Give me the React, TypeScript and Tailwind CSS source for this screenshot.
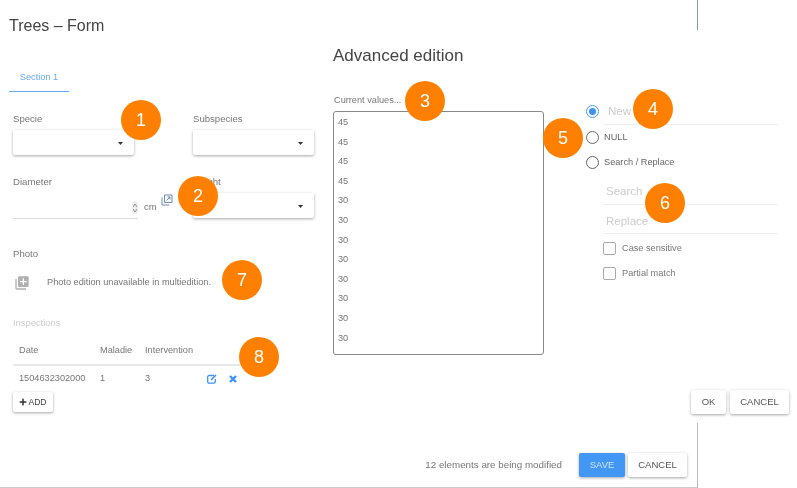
import React from "react";
import { MdLibraryAdd } from "react-icons/md";
import { FaPlus } from "react-icons/fa";

const Caret = () => (
  <svg width="5" height="3" viewBox="0 0 5 3" className="absolute right-[11px] top-[12px]">
    <path d="M0 0h5L2.5 3z" fill="#333" />
  </svg>
);

const Select = () => (
  <div className="relative w-[121px] h-[25px] bg-white rounded-[2px] shadow-[0_1px_3px_rgba(0,0,0,0.35)]">
    <Caret />
  </div>
);

const Btn = ({ children, className = "" }: { children: React.ReactNode; className?: string }) => (
  <div className={"h-[24px] flex items-center justify-center bg-white rounded-[2px] text-[9.5px] text-[#555] shadow-[0_1px_3px_rgba(0,0,0,0.35)] " + className}>
    {children}
  </div>
);

const Badge = ({ n, className }: { n: number; className: string }) => (
  <div className={"absolute w-[40px] h-[40px] rounded-full bg-[#ff8000] text-white text-[18px] font-medium flex items-center justify-center " + className}>
    {n}
  </div>
);

const Radio = ({ on = false }: { on?: boolean }) => (
  <div className={"w-[13px] h-[13px] rounded-full border-[1.5px] flex items-center justify-center shrink-0 " + (on ? "border-[#4a9bf5]" : "border-[#666]")}>
    {on && <div className="w-[7px] h-[7px] rounded-full bg-[#3f93f3]" />}
  </div>
);

const Check = ({ label }: { label: string }) => (
  <div className="flex items-center h-[25px] gap-[6px] text-[9.2px] text-[#777]">
    <div className="w-[13px] h-[13px] rounded-[2px] border border-[#aaa]" />
    {label}
  </div>
);

const values = [45, 45, 45, 45, 30, 30, 30, 30, 30, 30, 30, 30];

export default function App() {
  return (
    <div className="relative w-[797px] h-[488px] overflow-hidden bg-white text-[#666] font-['Liberation_Sans',Arial,sans-serif] blur-[0.35px]">
      <div className="flex h-[453px]">
        {/* Form */}
        <div className="w-[333px] shrink-0 pl-[13px]">
          <h1 className="-ml-[4px] mt-[16px] h-[20px] text-[16px] leading-[20px] text-[#444] font-normal">Trees – Form</h1>
          <div className="-ml-[4px] mt-[20px] w-[60px] h-[36px] pt-[15px] border-b border-[#64a9f5] text-center text-[9.2px] leading-[12px] text-[#64a9f5]">
            Section 1
          </div>
          <div className="mt-[21px] grid grid-cols-[121px_121px] gap-x-[59px]">
            <div>
              <div className="text-[9.6px] leading-[12px] text-[#777] mb-[5px]">Specie</div>
              <Select />
            </div>
            <div>
              <div className="text-[9.6px] leading-[12px] text-[#777] mb-[5px]">Subspecies</div>
              <Select />
            </div>
          </div>
          <div className="mt-[21px] grid grid-cols-[121px_121px] gap-x-[59px]">
            <div className="relative">
              <div className="text-[9.6px] leading-[12px] text-[#777]">Diameter</div>
              <div className="mt-[17px] w-[125px] h-[14px] border-b border-[#ddd]" />
              <div className="absolute left-[119px] top-[25px] w-[6px] h-[13px] rounded-[3px] bg-[#eee] flex flex-col items-center justify-center gap-[2px]">
                <svg width="4" height="3" viewBox="0 0 4 3"><path d="M0 3l2-3 2 3" fill="none" stroke="#666" strokeWidth="0.7" /></svg>
                <svg width="4" height="3" viewBox="0 0 4 3"><path d="M0 0l2 3 2-3" fill="none" stroke="#666" strokeWidth="0.7" /></svg>
              </div>
              <span className="absolute left-[131px] top-[25px] text-[9.5px] leading-[12px] text-[#777]">cm</span>
              <svg width="12" height="12" viewBox="0 0 12 12" className="absolute left-[148px] top-[18px]" fill="none" stroke="#6d8db0" strokeWidth="1">
                <path d="M3.5 1h7.5v7.5H3.5zM1 3.5v7.5h7.5" />
                <path d="M5.5 6.5L9 3M6.5 3H9v2.5" />
              </svg>
            </div>
            <div>
              <div className="text-[9.6px] leading-[12px] text-[#777] mb-[5px]">Height</div>
              <Select />
            </div>
          </div>
          <div className="mt-[29px] text-[9.6px] leading-[12px] text-[#777]">Photo</div>
          <div className="mt-[14px] flex items-center h-[18px] text-[9.2px] text-[#777]">
            <MdLibraryAdd className="ml-[1px] w-[16px] h-[16px] text-[#b0b0b0]" />
            <span className="ml-[17px]">Photo edition unavailable in multiedition.</span>
          </div>
          <div className="mt-[25px] text-[9.4px] leading-[12px] text-[#ccc]">Inspections</div>
          <div className="mt-[10px] w-[227px] text-[9.2px] text-[#777]">
            <div className="flex items-center h-[27px] pl-[6px] pb-[1px] border-b-2 border-[#e8e8e8]">
              <span className="w-[81px]">Date</span>
              <span className="w-[45px]">Maladie</span>
              <span>Intervention</span>
            </div>
            <div className="flex items-center h-[26px] pl-[6px]">
              <span className="w-[81px]">1504632302000</span>
              <span className="w-[45px]">1</span>
              <span className="w-[60px]">3</span>
              <svg width="10" height="10" viewBox="0 0 10 10" fill="none" stroke="#3f93f3" strokeWidth="1.3" className="ml-[2px]">
                <path d="M7 1.5H2a1.3 1.3 0 0 0-1.3 1.3v5A1.3 1.3 0 0 0 2 9.1h5a1.3 1.3 0 0 0 1.3-1.3V5" />
                <path d="M4 6l5-5" strokeWidth="1.6" />
              </svg>
              <svg width="8" height="8" viewBox="0 0 8 8" fill="none" stroke="#3f93f3" strokeWidth="2.4" className="ml-[12px]">
                <path d="M1 1l6 6M7 1L1 7" />
              </svg>
            </div>
          </div>
          <div className="w-[40px] h-[20px] flex items-center justify-center gap-[1px] bg-white rounded-[2px] text-[8.6px] text-[#444] shadow-[0_1px_3px_rgba(0,0,0,0.35)]">
            <FaPlus className="w-[8px] h-[8px] text-[#333]" />
            ADD
          </div>
        </div>

        {/* Advanced edition */}
        <div className="w-[456px] flex flex-col">
          <h2 className="mt-[46px] h-[20px] text-[17px] leading-[20px] text-[#444] font-normal">Advanced edition</h2>
          <div className="flex">
            <div className="w-[253px] shrink-0">
              <div className="ml-[1px] mt-[28px] text-[9.2px] leading-[12px] text-[#777]">Current values...</div>
              <div className="mt-[5px] w-[211px] h-[244px] pl-[4px] pt-[1px] border border-[#888] rounded-[3px] text-[9.2px] text-[#777]">
                {values.map((v, i) => (
                  <div key={i} className="h-[19.6px] leading-[19.6px]">{v}</div>
                ))}
              </div>
            </div>
            <div className="flex-1 -mt-[1px] pr-[10px] text-[9.2px] text-[#666]">
              <div className="mt-[34px] flex items-center gap-[5px] h-[26px]">
                <div className="self-start mt-[6px]"><Radio on /></div>
                <div className="flex-1 h-[26px] pl-[4px] pt-[4px] border-b border-[#eee] text-[11.5px] leading-[16px] text-[#ccc] -mt-[1px]">New</div>
              </div>
              <div className="flex items-center gap-[5px] h-[25px]"><Radio />NULL</div>
              <div className="flex items-center gap-[5px] h-[25px]"><Radio />Search / Replace</div>
              <div className="ml-[17px] mr-[1px]">
                <div className="mt-[4px] h-[26px] pl-[3px] pt-[4px] border-b border-[#eee] text-[11.5px] leading-[16px] text-[#ccc]">Search</div>
                <div className="mt-[3px] h-[26px] pl-[3px] pt-[5px] border-b border-[#eee] text-[11.5px] leading-[16px] text-[#ccc]">Replace</div>
                <div className="mt-[2px]"><Check label="Case sensitive" /><Check label="Partial match" /></div>
              </div>
            </div>
          </div>
          <div className="mt-[35px] flex justify-end gap-[4px]">
            <Btn className="w-[35px]">OK</Btn>
            <Btn className="w-[59px]">CANCEL</Btn>
          </div>
        </div>
      </div>

      {/* Footer */}
      <div className="flex items-center w-[697px] h-[35px] pb-[10px] pr-[10px] justify-end border-b border-[#ccc]">
        <span className="mr-[17px] text-[9.8px] text-[#777]">12 elements are being modified</span>
        <Btn className="w-[46px] !bg-[#4296f4] !text-[#cfe4fc]">SAVE</Btn>
        <Btn className="w-[59px] ml-[3px]">CANCEL</Btn>
      </div>

      {/* Window edges behind the overlay */}
      <div className="absolute left-[697px] top-0 w-px h-[30px] bg-[#8a9a94]" />
      <div className="absolute left-[697px] top-[423px] w-px h-[65px] bg-[#bbb]" />

      <Badge n={1} className="left-[121px] top-[100px]" />
      <Badge n={2} className="left-[178px] top-[176px]" />
      <Badge n={3} className="left-[405px] top-[81px]" />
      <Badge n={4} className="left-[633px] top-[89px]" />
      <Badge n={5} className="left-[543px] top-[118px]" />
      <Badge n={6} className="left-[645px] top-[183px]" />
      <Badge n={7} className="left-[222px] top-[260px]" />
      <Badge n={8} className="left-[239px] top-[337px]" />
    </div>
  );
}
